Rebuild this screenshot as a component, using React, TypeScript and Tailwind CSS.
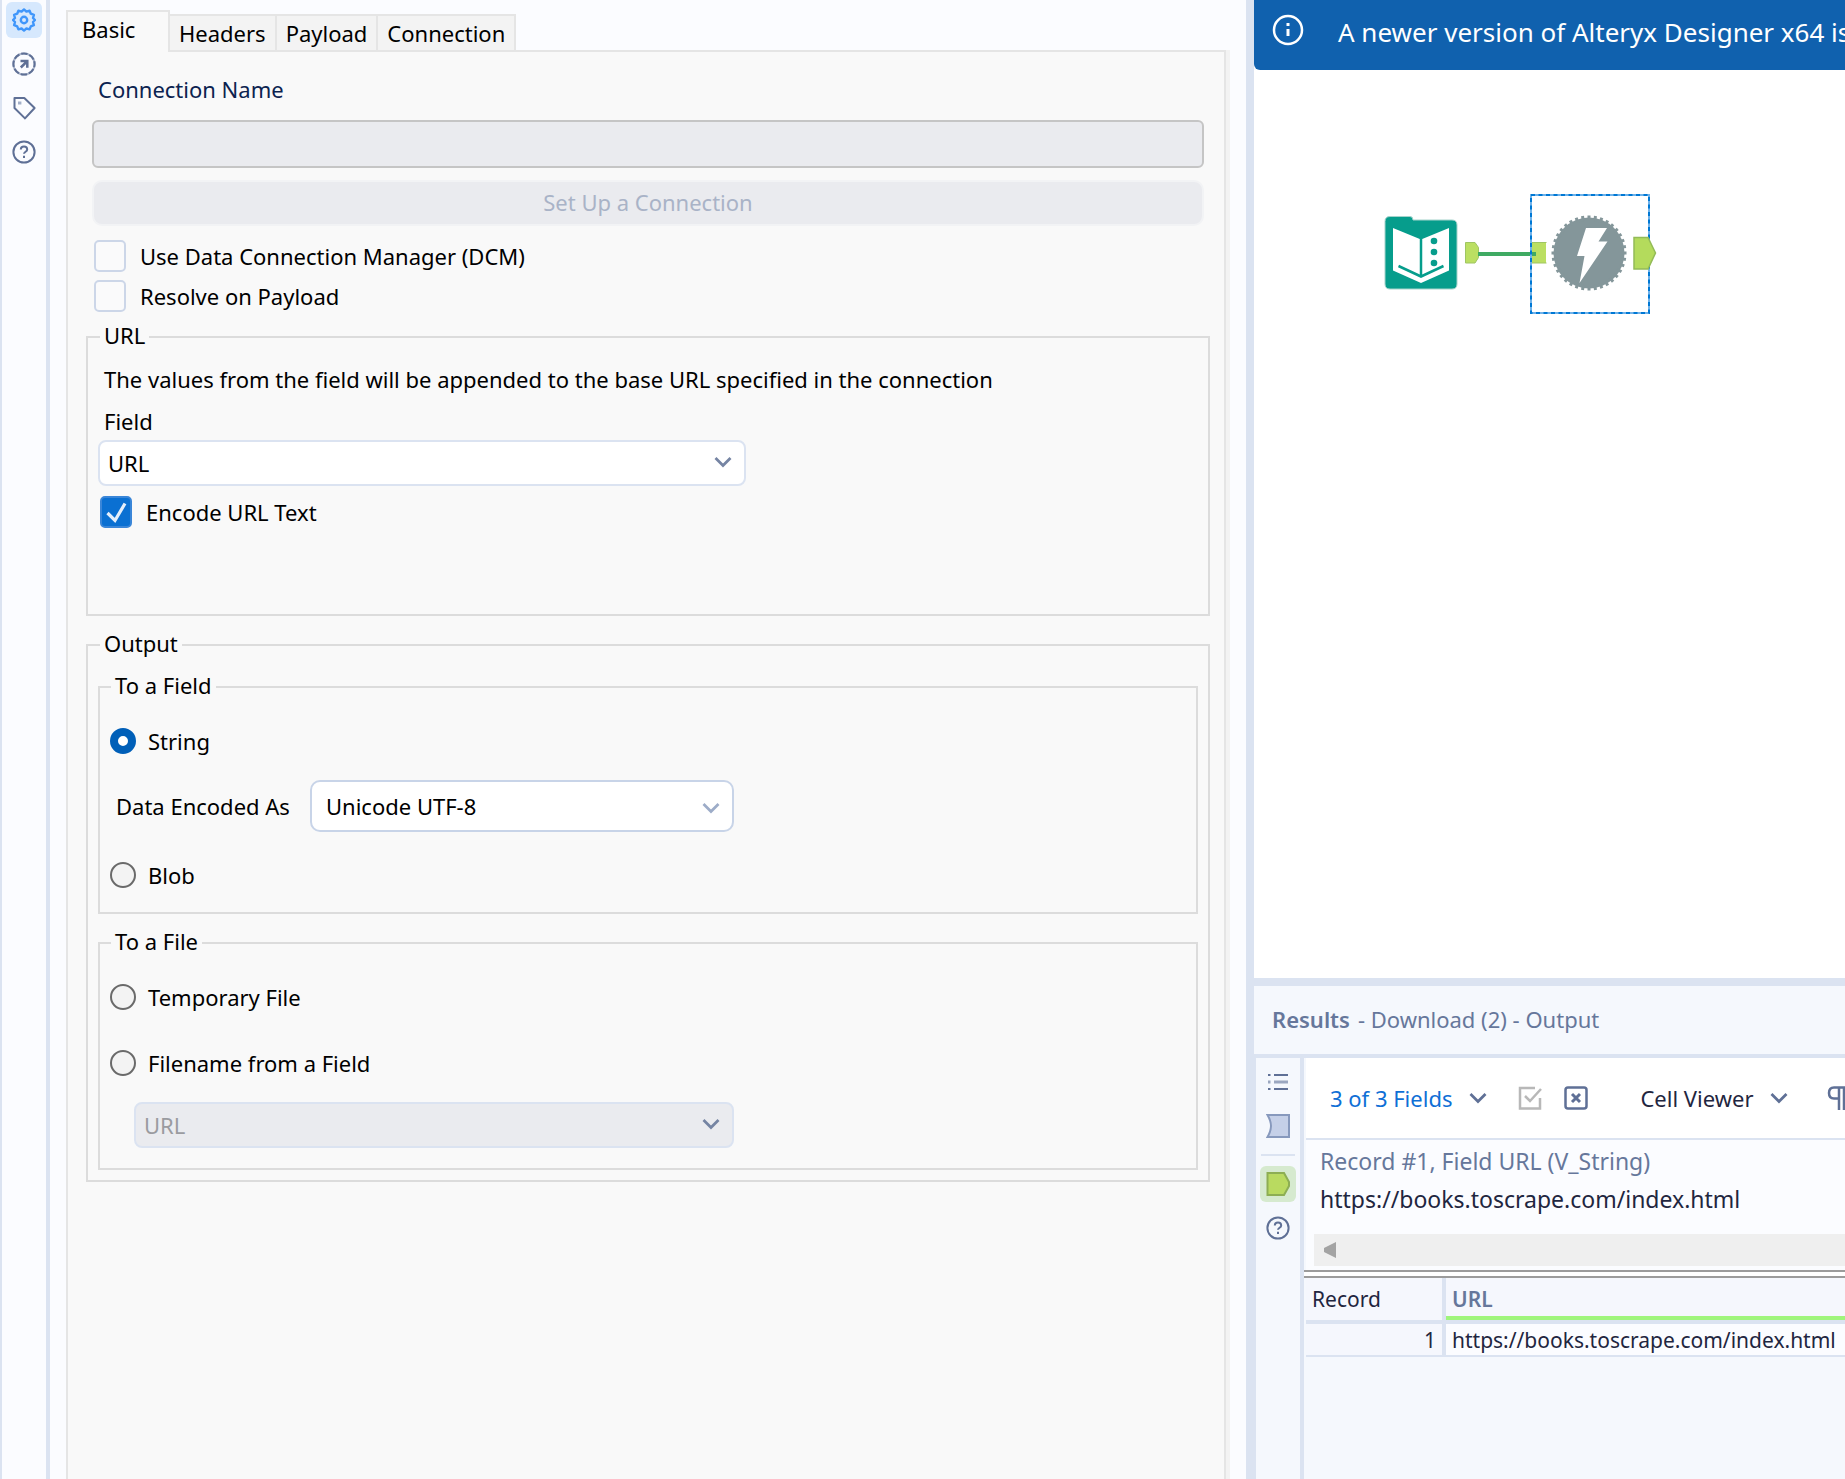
import React from "react";

function Chevron({ className }: { className: string }) {
  return (
    <svg viewBox="0 0 24 24" className={className} fill="none" stroke="currentColor" strokeWidth="2.75">
      <path d="M4.5 8L12 15.500 19.500 8" />
    </svg>
  );
}

function HelpIcon() {
  return (
    <svg viewBox="0 0 24 24" className="size-6" fill="none" stroke="#5f7096" strokeWidth="2">
      <circle cx="12" cy="12" r="10.6" />
      <path d="M8.8 9.6c0-2 1.4-3 3.2-3s3.2 1.1 3.2 2.8c0 2.3-3.2 2.3-3.2 4.4" />
      <path d="M12 15.8v2.2" />
    </svg>
  );
}

function GearIcon() {
  return (
    <svg viewBox="0 0 24 24" className="size-6" fill="none" stroke="#3f96fb" strokeWidth="2.4" strokeLinejoin="round">
      <path d="M12 1.4l2.4 2.2 3.2-.9 1.2 3 3.1 1.2-.9 3.1L23 12l-2 2 .9 3.2-3.1 1.2-1.2 3-3.2-.9L12 22.6l-2.4-2.1-3.2.9-1.2-3-3.1-1.2.9-3.2L1 12l2-2-.9-3.1 3.1-1.2 1.2-3 3.2.9z" />
      <circle cx="12" cy="12" r="3.2" />
    </svg>
  );
}

function ArrowCircleIcon() {
  return (
    <svg viewBox="0 0 24 24" className="size-6" fill="none" stroke="#5f7096" strokeWidth="2">
      <circle cx="12" cy="12" r="10.6" stroke="#a9b4ca" />
      <circle cx="12" cy="12" r="10.6" strokeDasharray="6.33 2" strokeDashoffset="3.16" />
      <path d="M8.5 9h6.800v6.800M15 9.300l-6.200 6.200" strokeWidth="2.5" />
    </svg>
  );
}

function TagIcon() {
  return (
    <svg viewBox="0 0 24 24" className="size-6" fill="none" stroke="#5f7096" strokeWidth="2" strokeLinejoin="round">
      <path d="M2.500 2h9.800L22.600 12 13 22.400 2.500 12z" />
      <path d="M6 7h3.400" stroke="#a3b0c9" strokeWidth="3" />
    </svg>
  );
}

function Check({ id, label, checked }: { id: string; label: string; checked?: boolean }) {
  return (
    <div className="flex h-8 items-center gap-[14px]">
      <span className="relative size-8 shrink-0">
        <input
          id={id}
          type="checkbox"
          defaultChecked={checked}
          className="peer size-8 appearance-none rounded-[5px] border-2 border-[#ccd6e8] bg-[#fafafb] checked:border-[#3a86d8] checked:bg-[#0a70d2]"
        />
        <svg viewBox="0 0 32 32" className="pointer-events-none absolute inset-0 hidden peer-checked:block" fill="none" stroke="#e4effb" strokeWidth="3.2">
          <path d="M7.500 17l7.500 7.500L25 7.500" />
        </svg>
      </span>
      <label htmlFor={id} className="text-[22px] leading-7 text-black">{label}</label>
    </div>
  );
}

function Radio({ id, label, name, checked }: { id: string; label: string; name: string; checked?: boolean }) {
  return (
    <div className="flex h-[26px] items-center gap-3 pl-[10px]">
      <input
        id={id}
        type="radio"
        name={name}
        defaultChecked={checked}
        className="size-[26px] shrink-0 appearance-none rounded-full border-2 border-[#6a6a6a] bg-[#f3f3f3] checked:border-8 checked:border-[#005fb8] checked:bg-white"
      />
      <label htmlFor={id} className="text-[22px] leading-7 text-black">{label}</label>
    </div>
  );
}

function Legend({ children, outer }: { children: React.ReactNode; outer?: boolean }) {
  return (
    <legend className={`${outer ? "ml-[2px]" : "ml-[11px]"} px-1 pb-1 text-[22px] leading-[22px] text-black`}>
      {children}
    </legend>
  );
}

const tabs = ["Headers", "Payload", "Connection"];

function ConfigPanel() {
  return (
    <section className="flex min-w-0 flex-1 flex-col bg-[#fbfcff] pt-[10px] pr-4 pl-4">
      <div role="tablist" className="z-10 -mb-[2px] flex items-end">
        <button role="tab" aria-selected="true" className="flex h-[42px] w-[104px] items-start border-2 border-b-0 border-[#e5e5e5] bg-[#f9f9f9] pt-[3px] pl-[14px] text-[22px] leading-7 text-black">
          Basic
        </button>
        {tabs.map((t) => (
          <button key={t} role="tab" aria-selected="false" className="h-[38px] border-2 border-l-0 border-[#e5e5e5] bg-[#f3f3f3] px-[9px] text-[22px] leading-7 text-black">
            {t}
          </button>
        ))}
      </div>
      <div className="flex-1 border-r-4 border-[#f3f3f3]">
        <div className="h-full border-2 border-b-0 border-[#e5e5e5] bg-[#f9f9f9] pt-[23px] pr-[14px] pl-[18px]">
          <div className="px-[6px]">
            <label htmlFor="conn" className="block pl-[6px] text-[22px] leading-7 text-[#0c2350]">Connection Name</label>
            <input id="conn" disabled className="mt-[17px] block h-12 w-full rounded-md border-2 border-[#c5c5c5] bg-[#eaebef]" />
            <button disabled className="mt-3 block h-[46px] w-full rounded-[10px] border-2 border-[#f2f3f5] bg-[#eaebef] pb-[3px] text-[22px] leading-7 text-[#a9b3c7]">
              Set Up a Connection
            </button>
            <div className="mt-[14px] flex flex-col gap-2 pl-[2px]">
              <Check id="dcm" label="Use Data Connection Manager (DCM)" />
              <Check id="resolve" label="Resolve on Payload" />
            </div>
          </div>

          <fieldset className="mt-3 border-2 border-[#dcdcdc] px-[10px] pb-[86px]">
            <Legend outer>URL</Legend>
            <p className="mt-[15px] pl-[6px] text-[22px] leading-7 text-black">
              The values from the field will be appended to the base URL specified in the connection
            </p>
            <label htmlFor="field" className="mt-[14px] block pl-[6px] text-[22px] leading-7 text-black">Field</label>
            <div className="relative mt-[5px] max-w-[648px]">
              <select id="field" className="block h-[46px] w-full appearance-none rounded-lg border-2 border-[#dbe3f1] bg-white pl-2 text-[22px] text-black">
                <option>URL</option>
              </select>
              <Chevron className="pointer-events-none absolute top-[10px] right-[11px] size-6 text-[#7584a3]" />
            </div>
            <div className="mt-[10px] pl-[2px]">
              <Check id="encode" label="Encode URL Text" checked />
            </div>
          </fieldset>

          <fieldset className="mt-4 border-2 border-[#dcdcdc] px-[10px] pb-[10px]">
            <Legend outer>Output</Legend>
            <fieldset className="mt-4 border-2 border-[#dcdcdc] pb-6">
              <Legend>To a Field</Legend>
              <div className="mt-7">
                <Radio id="string" name="output" label="String" checked />
              </div>
              <div className="mt-[26px] flex max-w-[634px] items-center pl-4">
                <label htmlFor="enc" className="w-[194px] shrink-0 text-[22px] leading-7 text-black">Data Encoded As</label>
                <div className="relative flex-1">
                  <select id="enc" className="block h-[52px] w-full appearance-none rounded-[10px] border-2 border-[#c8d4e8] bg-white pl-[14px] text-[22px] text-black">
                    <option>Unicode UTF-8</option>
                  </select>
                  <Chevron className="pointer-events-none absolute top-4 right-[11px] size-6 text-[#9dacc8]" />
                </div>
              </div>
              <div className="mt-[30px]">
                <Radio id="blob" name="output" label="Blob" />
              </div>
            </fieldset>
            <fieldset className="mt-4 border-2 border-[#dcdcdc] pb-5">
              <Legend>To a File</Legend>
              <div className="mt-7 flex flex-col gap-10">
                <Radio id="temp" name="output" label="Temporary File" />
                <Radio id="filename" name="output" label="Filename from a Field" />
              </div>
              <div className="relative mt-[26px] ml-[34px] max-w-[600px]">
                <select aria-label="Filename field" disabled className="block h-[46px] w-full appearance-none rounded-lg border-2 border-[#dbe3f1] bg-[#eaebef] pl-2 text-[22px] text-[#9a9ba0] opacity-100">
                  <option>URL</option>
                </select>
                <Chevron className="pointer-events-none absolute top-[10px] right-[11px] size-6 text-[#7584a3]" />
              </div>
            </fieldset>
          </fieldset>
        </div>
      </div>
    </section>
  );
}

const teeth = Array.from({ length: 36 }, (_, i) => i * 10);

function Workflow() {
  return (
    <div className="relative h-[908px] bg-white">
      <svg viewBox="0 0 74 74" className="absolute top-[146px] left-[130px] size-[74px]">
        <path d="M6 .5h20q3 0 3 3.500h39q5 0 5 5v59q0 5-5 5H6q-5 0-5-5V5.500q0-5 5-5z" fill="#069d8c" stroke="#a5d3cb" />
        <path d="M9 12l28 11.500L65 12v42.500L37 67 9 54.500z" fill="#fff" />
        <path d="M37 23v37" stroke="#069d8c" strokeWidth="2.500" />
        <path d="M14.500 50L37 60.500 59.500 50" fill="none" stroke="#069d8c" strokeWidth="2.500" />
        <circle cx="50" cy="25" r="3.300" fill="#069d8c" />
        <circle cx="50" cy="36" r="3.300" fill="#069d8c" />
        <circle cx="50" cy="47" r="3.300" fill="#069d8c" />
      </svg>
      <svg viewBox="0 0 192 122" className="absolute top-[123px] left-[211px] h-[122px] w-[192px]">
        <path d="M.5 49.500h9.500l3.500 5v10l-3.500 5.500H.5z" fill="#bbdf62" stroke="#9fc563" />
        <rect x="66" y="49" width="15" height="21" fill="#bbdf62" />
        <path d="M66 49.500h15.500M66 70h15.500" stroke="#9fc563" />
        <path d="M13 61h58" stroke="#3faa63" strokeWidth="4" />
        <g fill="#84969a">
          <circle cx="124" cy="60" r="35.500" />
          {teeth.map((a) => (
            <rect key={a} x="122.500" y="22.500" width="3" height="5" transform={`rotate(${a} 124 60)`} />
          ))}
        </g>
        <path d="M121 35h21l-8.500 13.500h9L114.500 90l5-27h-7.500z" fill="#fff" />
        <path d="M66 2h118v118H66z" fill="none" stroke="#6fb2ea" strokeWidth="2" />
        <path d="M66 2h118v118H66z" fill="none" stroke="#0078d4" strokeWidth="2" strokeDasharray="4 3.500" />
        <path d="M169 44.500h14l7.500 15.500-7.500 16h-14z" fill="#b4db5c" stroke="#93bb57" strokeWidth="1.500" />
      </svg>
    </div>
  );
}

function Results() {
  return (
    <div className="flex flex-1 flex-col border-t-8 border-[#dbe3f1] bg-[#f5f8fd]">
      <h2 className="flex h-[68px] items-center gap-2 pb-[2px] pl-[18px] text-[22px] leading-7 whitespace-nowrap text-[#66779b]">
        <span className="font-semibold">Results</span>
        <span>- Download (2) - Output</span>
      </h2>
      <div className="flex flex-1 border-t-4 border-[#dbe3f1]">
        <div className="flex w-[50px] shrink-0 flex-col items-center border-r-4 border-l-2 border-[#dbe3f1] pt-[10px]">
          <button aria-label="Messages" className="flex h-7 items-center">
            <svg viewBox="0 0 24 24" className="size-6" stroke="#5f7096" strokeWidth="2">
              <path d="M8 5h14M8 19h14M2 5h2.500M2 19h2.500" />
              <path d="M8 12h14M2 12h2.500" stroke="#9ba7c0" strokeWidth="3" />
            </svg>
          </button>
          <button aria-label="Input" className="mt-[18px]">
            <svg viewBox="0 0 24 24" className="size-6" fill="#c5d0e8" stroke="#8799bd" strokeWidth="2">
              <path d="M1.500 1h21.500v22H1.500Q5 17 5 12T1.500 1z" />
            </svg>
          </button>
          <hr className="mt-4 w-[34px] border-t-2 border-[#dbe3f1]" />
          <button aria-label="Output" className="mt-[10px] flex size-9 items-center justify-center rounded-md bg-[#d6eacf]">
            <svg viewBox="0 0 24 24" className="size-6" fill="#b9da60" stroke="#8dae53" strokeWidth="2">
              <path d="M1.500 1H18l5 9v4l-5 9H1.500z" />
            </svg>
          </button>
          <button aria-label="Help" className="mt-[14px]"><HelpIcon /></button>
        </div>
        <div className="min-w-0 flex-1 overflow-hidden pl-[2px]">
          <div className="flex h-[82px] items-center border-b-2 border-[#dbe3f1] bg-white pb-[1px] pl-6 whitespace-nowrap">
            <button className="flex items-center gap-[14px] text-[22px] leading-7 text-[#0f6fd6]">
              3 of 3 Fields
              <Chevron className="size-6 text-[#5f7096]" />
            </button>
            <button aria-label="Select all" className="ml-7">
              <svg viewBox="0 0 24 24" className="size-6" fill="none" stroke="#b8b8b8" strokeWidth="2.500">
                <path d="M17 2H2v20.500h20V12M7 10l5 5L23 3" />
              </svg>
            </button>
            <button aria-label="Clear" className="ml-[22px]">
              <svg viewBox="0 0 24 24" className="size-6" fill="none" stroke="#5f7096" strokeWidth="2.500">
                <rect x="1.500" y="1.500" width="21" height="21" rx="2.500" />
                <path d="M8 8l8 8M16 8l-8 8" strokeWidth="3" />
              </svg>
            </button>
            <span className="ml-[26px] h-10 w-[2px] bg-[#c3cde0]" />
            <button className="ml-[26px] flex items-center gap-[14px] text-[22px] leading-7 text-[#1f2640]">
              Cell Viewer
              <Chevron className="size-6 text-[#5f7096]" />
            </button>
            <button aria-label="Show whitespace" className="ml-9 shrink-0">
              <svg viewBox="0 0 24 24" className="size-6" fill="none" stroke="#5f7096" strokeWidth="2.500">
                <path d="M22 1.500H7q-5 0-5 5.500t5 5.500h5M12 1.500V24M17 1.500V24" />
              </svg>
            </button>
          </div>
          <div className="bg-[#fbfcff] pt-[6px]">
            <p className="pl-[14px] text-[23px] leading-[30px] text-[#66779b]">Record #1, Field URL (V_String)</p>
            <p className="mt-2 pl-[14px] text-[23px] leading-[30px] text-[#1f2640]">https://books.toscrape.com/index.html</p>
            <div className="mt-5 ml-2 flex h-8 items-center bg-[#efefef] pl-[10px]">
              <svg viewBox="0 0 12 16" className="h-4 w-3" fill="#a3a3a3"><path d="M12 0v16L0 10V6z" /></svg>
            </div>
            <div className="mt-1 -ml-[2px] h-2 border-y-2 border-[#9b9b9b] bg-white" />
          </div>
          <table className="w-full table-fixed border-collapse text-[21px] leading-7 text-[#1f2640]">
            <thead>
              <tr className="h-[44px] border-b-4 border-[#dbe3f1] bg-[#f5f7fd] text-left">
                <th className="w-[138px] border-r-4 border-[#dbe3f1] pl-[6px] font-normal">Record</th>
                <th className="pl-[6px] font-semibold text-[#66779b] shadow-[inset_0_-4px_0_#9ff57c]">URL</th>
              </tr>
            </thead>
            <tbody>
              <tr className="h-[34px] border-b-2 border-[#dbe3f1] whitespace-nowrap">
                <td className="border-r-4 border-[#dbe3f1] bg-[#f5f7fd] pr-[6px] text-right">1</td>
                <td className="bg-[#fbfcff] pl-[6px]">https://books.toscrape.com/index.html</td>
              </tr>
            </tbody>
          </table>
        </div>
      </div>
    </div>
  );
}

export default function App() {
  return (
    <main className="grid min-h-screen grid-cols-[1254fr_591fr] overflow-hidden bg-[#fbfcff] font-['Noto_Sans',sans-serif]">
      <div className="flex min-w-0 border-r-8 border-[#dbe3f1]">
        <nav className="flex w-[50px] shrink-0 flex-col items-center border-r-4 border-l-2 border-[#dbe3f1] pt-[2px]">
          <button aria-label="Configuration" className="flex size-9 items-center justify-center rounded-md bg-[#d6e8fd]"><GearIcon /></button>
          <button aria-label="Navigation" className="mt-[14px]"><ArrowCircleIcon /></button>
          <button aria-label="Annotation" className="mt-5"><TagIcon /></button>
          <button aria-label="Help" className="mt-5"><HelpIcon /></button>
        </nav>
        <ConfigPanel />
      </div>
      <div className="flex min-w-0 flex-col overflow-hidden">
        <div className="flex h-[70px] items-start gap-[34px] overflow-hidden rounded-bl-md bg-[#1061ae] pt-[14px] pl-[18px] whitespace-nowrap text-white">
          <svg viewBox="0 0 32 32" className="size-8 shrink-0" fill="none" stroke="#fff" strokeWidth="2.500">
            <circle cx="16" cy="16" r="14" />
            <path d="M16 15v7M16 9v3" strokeWidth="3" />
          </svg>
          <span className="text-[26px] leading-9">A newer version of Alteryx Designer x64 is</span>
        </div>
        <Workflow />
        <Results />
      </div>
    </main>
  );
}
